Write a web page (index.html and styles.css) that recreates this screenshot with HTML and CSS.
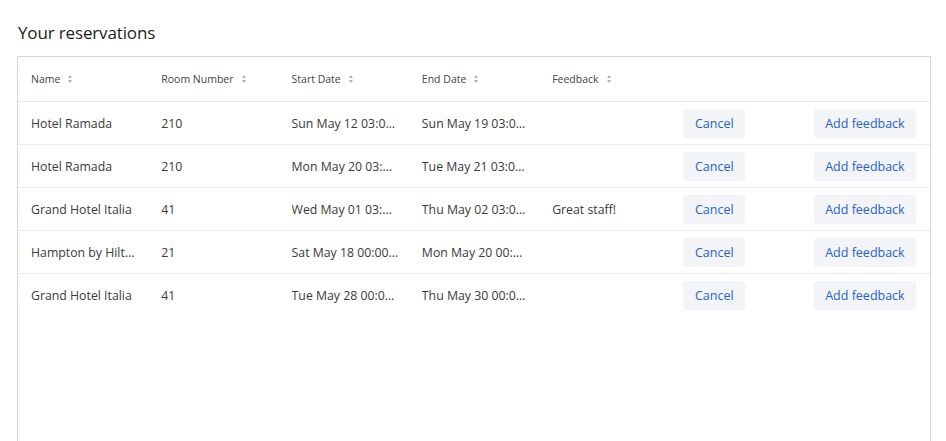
FILE: index.html
```html
<!DOCTYPE html>
<html>
<head>
<meta charset="utf-8">
<link rel="stylesheet" href="styles.css">
</head>
<body>
<h2 class="title">Your reservations</h2>
<div class="panel">
  <table class="grid">
    <thead>
      <tr>
        <th><span class="hd">Name<span class="sort"></span></span></th>
        <th><span class="hd">Room Number<span class="sort"></span></span></th>
        <th><span class="hd">Start Date<span class="sort"></span></span></th>
        <th><span class="hd">End Date<span class="sort"></span></span></th>
        <th><span class="hd">Feedback<span class="sort"></span></span></th>
        <th></th>
        <th></th>
      </tr>
    </thead>
    <tbody>
      <tr>
        <td><div class="ell">Hotel Ramada</div></td>
        <td><div class="ell">210</div></td>
        <td><div class="ell">Sun May 12 03:00:00 GMT+0300</div></td>
        <td><div class="ell">Sun May 19 03:00:00 GMT+0300</div></td>
        <td><div class="ell"></div></td>
        <td><button class="btn">Cancel</button></td>
        <td><button class="btn">Add feedback</button></td>
      </tr>
      <tr>
        <td><div class="ell">Hotel Ramada</div></td>
        <td><div class="ell">210</div></td>
        <td><div class="ell">Mon May 20 03:00:00 GMT+0300</div></td>
        <td><div class="ell">Tue May 21 03:00:00 GMT+0300</div></td>
        <td><div class="ell"></div></td>
        <td><button class="btn">Cancel</button></td>
        <td><button class="btn">Add feedback</button></td>
      </tr>
      <tr>
        <td><div class="ell">Grand Hotel Italia</div></td>
        <td><div class="ell">41</div></td>
        <td><div class="ell">Wed May 01 03:00:00 GMT+0300</div></td>
        <td><div class="ell">Thu May 02 03:00:00 GMT+0300</div></td>
        <td><div class="ell">Great staff!</div></td>
        <td><button class="btn">Cancel</button></td>
        <td><button class="btn">Add feedback</button></td>
      </tr>
      <tr>
        <td><div class="ell">Hampton by Hilton Bucharest</div></td>
        <td><div class="ell">21</div></td>
        <td><div class="ell">Sat May 18 00:00:00 GMT+0300</div></td>
        <td><div class="ell">Mon May 20 00:00:00 GMT+0300</div></td>
        <td><div class="ell"></div></td>
        <td><button class="btn">Cancel</button></td>
        <td><button class="btn">Add feedback</button></td>
      </tr>
      <tr>
        <td><div class="ell">Grand Hotel Italia</div></td>
        <td><div class="ell">41</div></td>
        <td><div class="ell">Tue May 28 00:00:00 GMT+0300</div></td>
        <td><div class="ell">Thu May 30 00:00:00 GMT+0300</div></td>
        <td><div class="ell"></div></td>
        <td><button class="btn">Cancel</button></td>
        <td><button class="btn">Add feedback</button></td>
      </tr>
    </tbody>
  </table>
</div>
</body>
</html>
```

FILE: styles.css
```css
* { box-sizing: border-box; }
html, body { margin: 0; padding: 0; background: #fff; }
body {
  font-family: "Open Sans", "Noto Sans", sans-serif;
  color: #333;
  padding: 0 15px 0 17px;
}
.title {
  margin: 0;
  padding: 21px 0 0 1px;
  height: 56px;
  font-size: 17px;
  font-weight: 400;
  color: #1c1c1c;
  line-height: 24px;
  letter-spacing: -0.15px;
}
.panel {
  border: 1px solid #d6d6d6;
  border-bottom: none;
  height: 385px;
}
.grid {
  width: 100%;
  border-collapse: collapse;
  table-layout: fixed;
}
.grid th {
  height: 44px;
  text-align: left;
  font-weight: 400;
  font-size: 10.5px;
  color: #444;
  padding: 0 13px;
  border-bottom: 1px solid #e8e8e8;
}
.hd { display: inline-flex; align-items: center; white-space: nowrap; }
.sort {
  display: inline-block;
  width: 5px;
  height: 8px;
  margin-left: 8px;
  position: relative;
}
.sort::before, .sort::after {
  content: "";
  position: absolute;
  left: 0;
  border-left: 2.5px solid transparent;
  border-right: 2.5px solid transparent;
}
.sort::before { top: 0; border-bottom: 3px solid #b0b0b0; }
.sort::after { bottom: 0; border-top: 3px solid #b0b0b0; }
.grid td {
  height: 43px;
  padding: 1px 10px 0 13px;
  font-size: 12.3px;
  color: #3a3a3a;
  border-bottom: 1px solid #ebebeb;
  vertical-align: middle;
}
.grid tbody tr:last-child td { border-bottom: none; }
.ell {
  white-space: nowrap;
  overflow: hidden;
  text-overflow: ellipsis;
}
.btn {
  font-family: inherit;
  font-size: 12.5px;
  color: #2563c7;
  background: #f2f4f7;
  border: none;
  border-radius: 3px;
  height: 29px;
  margin-left: 1px;
  padding: 0 11.5px;
  cursor: pointer;
  white-space: nowrap;
}
```
